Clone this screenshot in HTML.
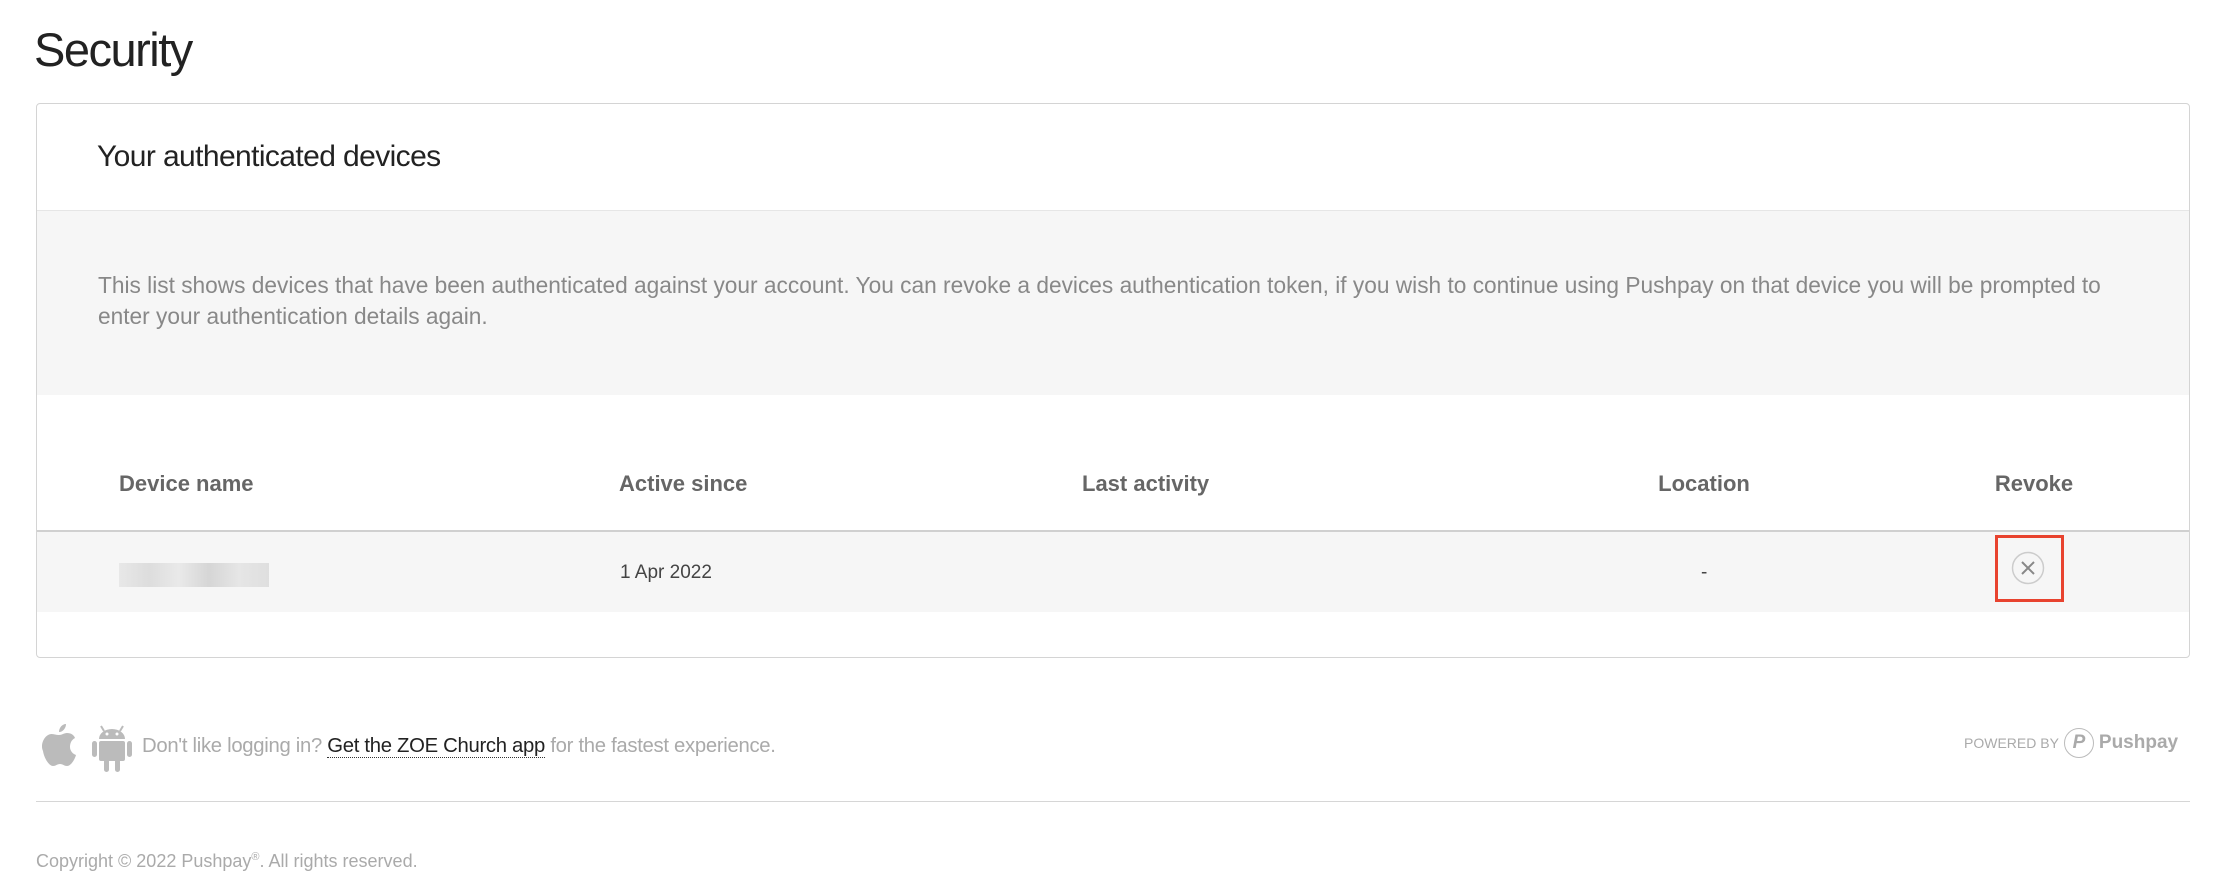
<!DOCTYPE html>
<html><head><meta charset="utf-8"><style>
*{box-sizing:border-box;margin:0;padding:0}
body{width:2236px;height:892px;background:#fff;font-family:"Liberation Sans",Arial,sans-serif;position:relative;overflow:hidden;color:#333}
.abs{position:absolute;white-space:nowrap}
h1{position:absolute;left:34px;top:22px;font-size:47px;font-weight:300;color:#222;letter-spacing:-1.5px;line-height:56px}
.card{position:absolute;left:36px;top:103px;width:2154px;height:555px;border:1px solid #d4d4d4;border-radius:4px;overflow:hidden}
.hdr{position:absolute;left:0;top:0;width:100%;height:107px;border-bottom:1px solid #e6e6e6}
.hdr span{position:absolute;left:60px;top:36px;font-size:30px;color:#222;letter-spacing:-0.6px}
.desc{position:absolute;left:0;top:107px;width:100%;height:184px;background:#f6f6f6}
.desc p{position:absolute;left:61px;top:59px;width:2040px;font-size:22.7px;line-height:31px;color:#888}
.th{position:absolute;top:367px;font-size:22px;font-weight:bold;color:#666}
.hline{position:absolute;left:0;top:426px;width:100%;height:2px;background:#d0d0d0}
.row{position:absolute;left:0;top:428px;width:100%;height:80px;background:#f6f6f6}
.td{position:absolute;top:458px;font-size:19px;color:#444}
</style></head><body>
<h1>Security</h1>
<div class="card">
 <div class="hdr"><span>Your authenticated devices</span></div>
 <div class="desc"><p style="white-space:normal">This list shows devices that have been authenticated against your account. You can revoke a devices authentication token, if you wish to continue using Pushpay on that device you will be prompted to enter your authentication details again.</p></div>
 <div class="th" style="left:82px">Device name</div>
 <div class="th" style="left:582px">Active since</div>
 <div class="th" style="left:1045px">Last activity</div>
 <div class="th" style="left:1667px;width:0;display:flex;justify-content:center"><span>Location</span></div>
 <div class="th" style="left:1997px;width:0;display:flex;justify-content:center"><span>Revoke</span></div>
 <div class="hline"></div>
 <div class="row"></div>
 <div class="abs" style="left:82px;top:459px;width:150px;height:24px;background:linear-gradient(90deg,#e6e6e6,#dadada 20%,#e8e8e8 40%,#d2d2d2 60%,#e4e4e4 80%,#dcdcdc);opacity:.9"></div>
 <div class="td" style="left:583px">1 Apr 2022</div>
 <div class="td" style="left:1664px">-</div>
 <div class="abs" style="left:1958px;top:431px;width:69px;height:67px;border:3px solid #e8432f"></div>
 <svg class="abs" style="left:1974px;top:447px" width="34" height="34" viewBox="0 0 34 34"><circle cx="17" cy="17" r="15.5" fill="none" stroke="#ccc" stroke-width="1.5"/><path d="M11 11L23 23M23 11L11 23" stroke="#888" stroke-width="2"/></svg>
</div>
<svg class="abs" style="left:38px;top:722px" width="42" height="48" viewBox="0 0 42 48"><path d="M28 2c0 4-3 8-7 8 0-4 3-8 7-8zM21 13c3 0 5-2 8-2 4 0 7 2 8 5-4 2-5 6-5 9 0 4 3 7 6 8-1 4-5 11-9 11-3 0-4-2-7-2s-4 2-7 2c-4 0-9-8-10-15C2 23 6 13 13 12c3 0 5 1 8 1z" fill="#bbb"/></svg>
<svg class="abs" style="left:92px;top:722px" width="40" height="50" viewBox="0 0 40 50"><path d="M9 4l3 5M31 4l-3 5" stroke="#bbb" stroke-width="2"/><path d="M7 17a13 10 0 0 1 26 0z" fill="#bbb"/><rect x="7" y="19" width="26" height="20" rx="2" fill="#bbb"/><rect x="0" y="19" width="5" height="16" rx="2.5" fill="#bbb"/><rect x="35" y="19" width="5" height="16" rx="2.5" fill="#bbb"/><rect x="12" y="37" width="5" height="13" rx="2.5" fill="#bbb"/><rect x="23" y="37" width="5" height="13" rx="2.5" fill="#bbb"/><circle cx="15" cy="12" r="1.5" fill="#fff"/><circle cx="25" cy="12" r="1.5" fill="#fff"/></svg>
<div class="abs" style="left:142px;top:735px;font-size:20.3px;letter-spacing:-0.3px;color:#aaa">Don't like logging in? <span style="color:#222;border-bottom:1px dotted #333">Get the ZOE Church app</span> for the fastest experience.</div>
<div class="abs" style="left:1964px;top:728px;font-size:14px;color:#aaa;display:flex;align-items:center;gap:5px">POWERED BY <span style="display:inline-block;width:30px;height:30px;border:1.5px solid #bbb;border-radius:50%;text-align:center;line-height:27px;font-weight:bold;font-style:italic;font-size:19px;color:#aaa">P</span><span style="font-size:19px;font-weight:bold;color:#aaa">Pushpay</span></div>
<div class="abs" style="left:36px;top:801px;width:2154px;height:1px;background:#d6d6d6"></div>
<div class="abs" style="left:36px;top:851px;font-size:18px;color:#aaa">Copyright © 2022 Pushpay<sup style="font-size:11px">®</sup>. All rights reserved.</div>
</body></html>
